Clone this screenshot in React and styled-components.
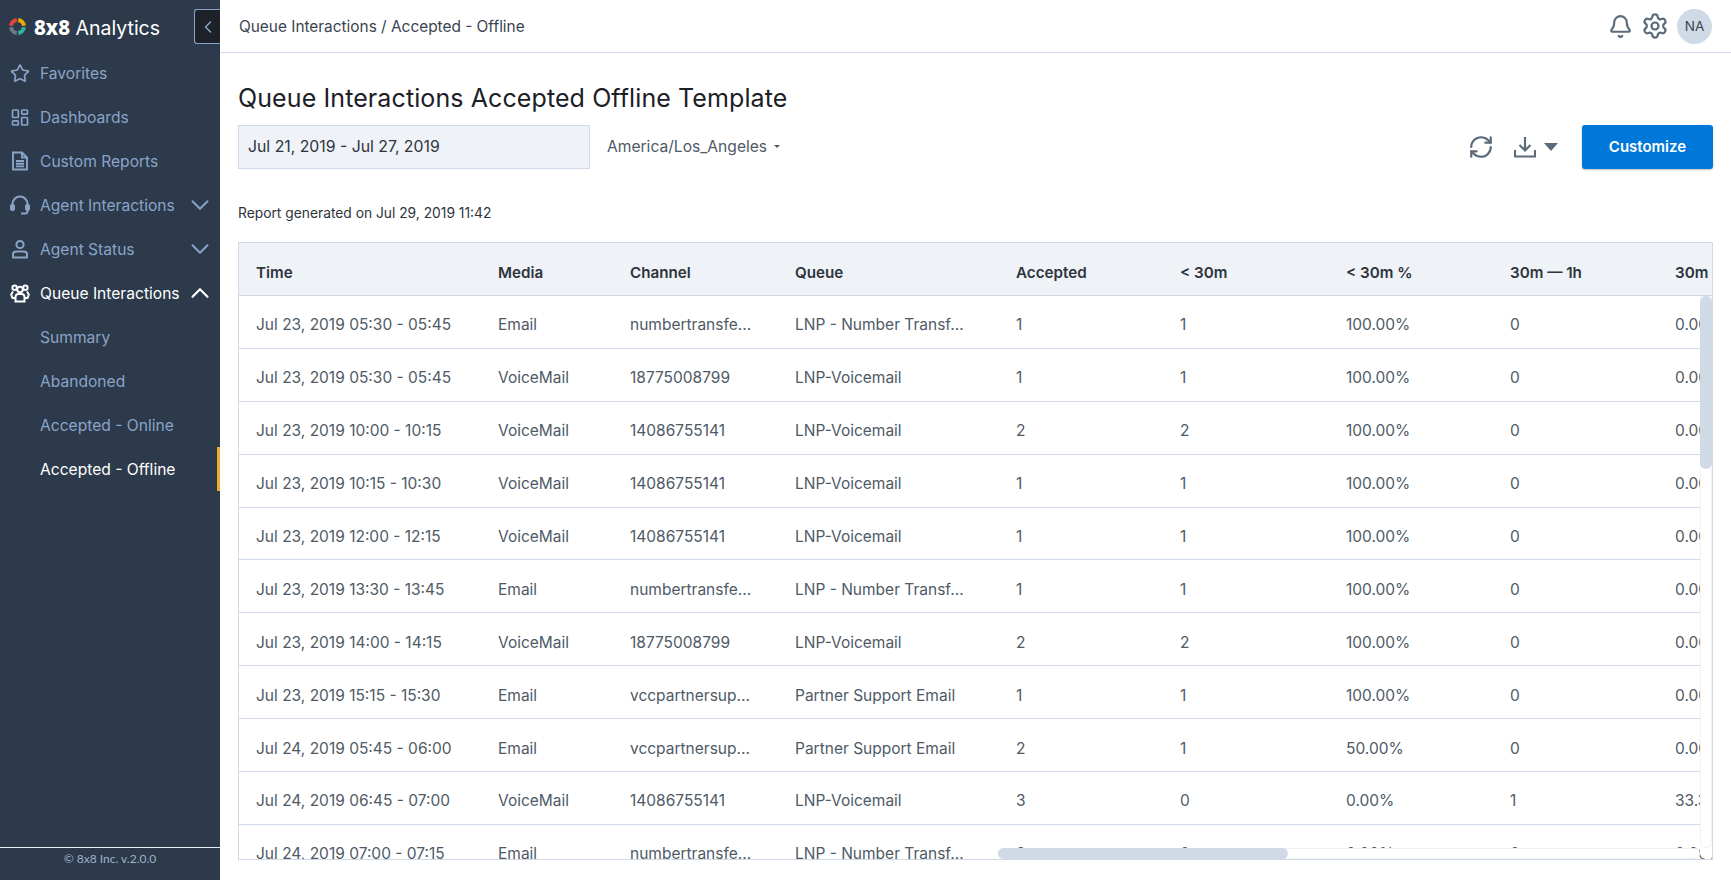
import React from "react";
import styled, { createGlobalStyle } from "styled-components";
import { Star, LayoutDashboard, ChevronDown, ChevronUp, ChevronLeft, Bell, Settings, RefreshCw } from "lucide-react";

const FONT = `Inter, "Noto Sans", sans-serif`;

const GlobalStyle = createGlobalStyle`
    html, body {
        margin: 0;
        height: 100%;
        overflow: hidden;
        background: #fff;
        font-family: ${FONT};
    }
    * {
        box-sizing: border-box;
    }
`;

const Page = styled.div`
    display: flex;
    height: 880px;
    width: 1731px;
`;

const Sidebar = styled.aside`
    position: relative;
    width: 220px;
    flex: none;
    display: flex;
    flex-direction: column;
    background: #2c3a4b;
`;

const Brand = styled.div`
    height: 51px;
    display: flex;
    align-items: center;
    padding: 2px 0 0 9px;
    color: #fff;
    font-size: 19.5px;
    gap: 8px;

    b {
        font-family: "Noto Sans", sans-serif;
        font-size: 20.5px;
        font-weight: 800;
    }
`;

const CollapseButton = styled.button`
    position: absolute;
    top: 9px;
    right: 0;
    width: 26px;
    height: 35px;
    padding: 0;
    display: flex;
    align-items: center;
    justify-content: center;
    background: #1d2229;
    color: #8aa4c8;
    border: 1px solid #8aa4c8;
    border-right: 0;
    border-radius: 3px 0 0 3px;
`;

const Nav = styled.nav`
    flex: 1;
    display: flex;
    flex-direction: column;
`;

const NavItem = styled.div`
    position: relative;
    height: 44px;
    flex: none;
    display: flex;
    align-items: center;
    padding: 0 11px 0 10px;
    font-size: 15.6px;
    color: ${props => (props.$light ? "#fff" : "#8aa4c8")};
`;

const NavIcon = styled.span`
    width: 20px;
    height: 20px;
    margin-right: 10px;
    display: flex;
    align-items: center;
    justify-content: center;
`;

const NavLabel = styled.span`
    flex: 1;
    padding-left: ${props => (props.$sub ? "30px" : "0")};
`;

const NavArrow = styled.span`
    width: 18px;
    height: 18px;
    display: flex;
    align-items: center;
    justify-content: center;
`;

const ActiveMark = styled.span`
    position: absolute;
    top: 0;
    right: 0;
    bottom: 0;
    width: 3px;
    background: #eeaa33;
`;

const SideFooter = styled.div`
    height: 33px;
    flex: none;
    border-top: 1px solid #e8edf3;
    padding-top: 3px;
    text-align: center;
    font-family: Lato, sans-serif;
    font-size: 12px;
    color: #9fb2c9;
`;

const Main = styled.main`
    flex: 1;
    min-width: 0;
    display: flex;
    flex-direction: column;
`;

const TopBar = styled.header`
    height: 53px;
    flex: none;
    display: flex;
    align-items: center;
    justify-content: space-between;
    padding: 0 19px;
    border-bottom: 1px solid #d0dae6;
    font-size: 15.4px;
    color: #3a4450;
`;

const TopIcons = styled.div`
    display: flex;
    align-items: center;
    gap: 8px;
    color: #5c6b7a;
`;

const Avatar = styled.div`
    width: 35px;
    height: 35px;
    border-radius: 50%;
    background: #d0dae6;
    display: flex;
    align-items: center;
    justify-content: center;
    font-size: 13.5px;
    color: #3a4450;
`;

const Content = styled.div`
    flex: 1;
    min-height: 0;
    display: flex;
    flex-direction: column;
    padding: 29px 18px 20px;
`;

const Title = styled.h1`
    margin: 0;
    font-size: 25px;
    line-height: 32px;
    letter-spacing: 0.1px;
    font-weight: 400;
    color: #1b2026;
`;

const Toolbar = styled.div`
    margin-top: 11px;
    display: flex;
    align-items: center;
    height: 44px;
`;

const DateBox = styled.div`
    width: 352px;
    height: 44px;
    display: flex;
    align-items: center;
    padding: 0 0 2px 9px;
    background: #eff2f7;
    border: 1px solid #d0dae6;
    font-size: 15.8px;
    color: #2d343c;
`;

const Zone = styled.div`
    margin-left: 17px;
    flex: 1;
    display: flex;
    align-items: center;
    gap: 7px;
    padding-bottom: 1px;
    font-size: 15.6px;
    color: #4e5a66;
`;

const Caret = styled.span`
    width: 0;
    height: 0;
    border-style: solid;
    border-color: ${props => props.$color} transparent transparent;
    border-width: ${props => props.$h}px ${props => props.$w}px 0;
`;

const ToolIcons = styled.div`
    display: flex;
    align-items: center;
    color: #5c6b7a;
    margin-right: 24px;
`;

const DownloadGroup = styled.div`
    display: flex;
    align-items: center;
    gap: 8px;
    margin-left: 20px;
`;

const CustomizeButton = styled.button`
    width: 131px;
    height: 44px;
    padding: 0 0 2px;
    border: 0;
    border-radius: 3px;
    background: #0078d9;
    box-shadow: 0 1px 2px rgba(0, 0, 0, 0.25);
    color: #fff;
    font-family: ${FONT};
    font-size: 15px;
    font-weight: 600;
`;

const Generated = styled.div`
    margin-top: 35px;
    font-size: 13.8px;
    line-height: 18px;
    color: #2d343c;
`;

const TableFrame = styled.div`
    position: relative;
    margin-top: 20px;
    flex: 1;
    min-height: 0;
    overflow: hidden;
    border: 1px solid #d0dae6;
`;

const Row = styled.div`
    display: grid;
    grid-template-columns: 242px 132px 165px 221px 164px 166px 164px 165px 165px;
    align-items: center;
    height: ${props => (props.$head ? "53px" : "52.9px")};
    padding-top: 6px;
    border-bottom: 1px solid #d0dae6;
    background: ${props => (props.$head ? "#eff2f7" : "#fff")};
    font-size: ${props => (props.$head ? "15.2px" : "15.5px")};
    color: ${props => (props.$head ? "#2d343c" : "#4e5a66")};
    font-weight: ${props => (props.$head ? 600 : 400)};
`;

const Cell = styled.div`
    padding-left: 17px;
    white-space: nowrap;
`;

const VTrack = styled.div`
    position: absolute;
    top: 53px;
    right: 0;
    bottom: 11px;
    width: 12px;
    background: #fff;
    border: 1px solid #eef1f5;
    border-radius: 0 0 6px 6px;
    box-shadow: 0 11px 0 #fff;
`;

const VThumb = styled.div`
    position: absolute;
    top: 53px;
    right: 0;
    width: 12px;
    height: 173px;
    border-radius: 6px;
    background: #d0dae6;
`;

const HTrack = styled.div`
    position: absolute;
    left: 759px;
    right: 12px;
    bottom: 0;
    height: 11px;
    background: #fff;
    border-radius: 6px;
    border: 1px solid #eef1f5;
`;

const HThumb = styled.div`
    position: absolute;
    left: 759px;
    bottom: 0;
    width: 290px;
    height: 11px;
    border-radius: 6px;
    background: #d0dae6;
`;

const LogoRing = () => (
    <svg width="17" height="17" viewBox="0 0 34 34" fill="none" strokeWidth="8">
        <path d="M18.5 4.1 A13 13 0 0 1 29.9 15.5" stroke="#f2a900" />
        <path d="M29.9 18.5 A13 13 0 0 1 18.5 29.9" stroke="#35b0a0" />
        <path d="M15.5 29.9 A13 13 0 0 1 4.1 18.5" stroke="#6d7a86" />
        <path d="M4.1 15.5 A13 13 0 0 1 15.5 4.1" stroke="#e4453a" />
    </svg>
);

const ReportIcon = () => (
    <svg width="18" height="20" viewBox="0 0 18 20" fill="none" stroke="currentColor" strokeWidth="1.9">
        <path d="M2 1.5h9l5 5V18.5H2z" />
        <path d="M11 1.5V6.5h5M5 10h8M5 12.7h8M5 15.4h8" />
    </svg>
);

const HeadsetIcon = () => (
    <svg width="20" height="20" viewBox="0 0 20 20" fill="none" stroke="currentColor" strokeWidth="2">
        <path d="M2.5 12V9a7.5 7.5 0 0 1 15 0v3" />
        <rect x="1" y="10" width="3" height="5" rx="1.2" fill="currentColor" />
        <rect x="16" y="10" width="3" height="5" rx="1.2" fill="currentColor" />
        <path d="M17.5 15v1a2.5 2.5 0 0 1-2.5 2.5h-4" />
    </svg>
);

const PersonIcon = () => (
    <svg width="18" height="20" viewBox="0 0 18 20" fill="none" stroke="currentColor" strokeWidth="2">
        <circle cx="9" cy="5.5" r="3.6" />
        <path d="M2 18.5v-3a3 3 0 0 1 3-3h8a3 3 0 0 1 3 3v3z" />
    </svg>
);

const GroupIcon = () => (
    <svg width="20" height="20" viewBox="0 0 20 20" fill="none" stroke="currentColor" strokeWidth="2">
        <circle cx="10" cy="6.5" r="2.8" />
        <circle cx="4.6" cy="4.8" r="2.2" />
        <circle cx="15.4" cy="4.8" r="2.2" />
        <path d="M5.5 18.5v-4.5a3 3 0 0 1 3-3h3a3 3 0 0 1 3 3v4.5z" />
        <path d="M5.5 15H2.5L1.2 11.5 3 8.5M14.5 15h3l1.3-3.5L17 8.5" />
    </svg>
);

const DownloadIcon = () => (
    <svg width="22" height="22" viewBox="0 0 22 22" fill="none" stroke="currentColor" strokeWidth="2.2">
        <path d="M11 1v13M5.5 9l5.5 5.5L16.5 9" />
        <path d="M1 14v6.5h20V14" />
    </svg>
);

const navItems = [
    { label: "Favorites", icon: <Star size={21} strokeWidth={2} /> },
    { label: "Dashboards", icon: <LayoutDashboard size={23} strokeWidth={2} /> },
    { label: "Custom Reports", icon: <ReportIcon /> },
    { label: "Agent Interactions", icon: <HeadsetIcon />, arrow: "down" },
    { label: "Agent Status", icon: <PersonIcon />, arrow: "down" },
    { label: "Queue Interactions", icon: <GroupIcon />, arrow: "up", light: true },
    { label: "Summary", sub: true },
    { label: "Abandoned", sub: true },
    { label: "Accepted - Online", sub: true },
    { label: "Accepted - Offline", sub: true, light: true, active: true },
];

const columns = ["Time", "Media", "Channel", "Queue", "Accepted", "< 30m", "< 30m %", "30m — 1h", "30m — 1h %"];

const rows = [
    ["Jul 23, 2019 05:30 - 05:45", "Email", "numbertransfe...", "LNP - Number Transf...", "1", "1", "100.00%", "0", "0.00%"],
    ["Jul 23, 2019 05:30 - 05:45", "VoiceMail", "18775008799", "LNP-Voicemail", "1", "1", "100.00%", "0", "0.00%"],
    ["Jul 23, 2019 10:00 - 10:15", "VoiceMail", "14086755141", "LNP-Voicemail", "2", "2", "100.00%", "0", "0.00%"],
    ["Jul 23, 2019 10:15 - 10:30", "VoiceMail", "14086755141", "LNP-Voicemail", "1", "1", "100.00%", "0", "0.00%"],
    ["Jul 23, 2019 12:00 - 12:15", "VoiceMail", "14086755141", "LNP-Voicemail", "1", "1", "100.00%", "0", "0.00%"],
    ["Jul 23, 2019 13:30 - 13:45", "Email", "numbertransfe...", "LNP - Number Transf...", "1", "1", "100.00%", "0", "0.00%"],
    ["Jul 23, 2019 14:00 - 14:15", "VoiceMail", "18775008799", "LNP-Voicemail", "2", "2", "100.00%", "0", "0.00%"],
    ["Jul 23, 2019 15:15 - 15:30", "Email", "vccpartnersup...", "Partner Support Email", "1", "1", "100.00%", "0", "0.00%"],
    ["Jul 24, 2019 05:45 - 06:00", "Email", "vccpartnersup...", "Partner Support Email", "2", "1", "50.00%", "0", "0.00%"],
    ["Jul 24, 2019 06:45 - 07:00", "VoiceMail", "14086755141", "LNP-Voicemail", "3", "0", "0.00%", "1", "33.33%"],
    ["Jul 24, 2019 07:00 - 07:15", "Email", "numbertransfe...", "LNP - Number Transf...", "2", "0", "0.00%", "0", "0.00%"],
];

export default function App() {
    return (
        <Page>
            <GlobalStyle />
            <Sidebar>
                <Brand>
                    <LogoRing />
                    <span>
                        <b>8x8</b> Analytics
                    </span>
                </Brand>
                <CollapseButton>
                    <ChevronLeft size={20} strokeWidth={1.8} />
                </CollapseButton>
                <Nav>
                    {navItems.map(item => (
                        <NavItem key={item.label} $light={item.light}>
                            {item.sub ? null : <NavIcon>{item.icon}</NavIcon>}
                            <NavLabel $sub={item.sub}>{item.label}</NavLabel>
                            {item.arrow ? (
                                <NavArrow>
                                    {item.arrow === "up" ? (
                                        <ChevronUp size={30} strokeWidth={1.7} style={{ flex: "none" }} />
                                    ) : (
                                        <ChevronDown size={30} strokeWidth={1.5} style={{ flex: "none" }} />
                                    )}
                                </NavArrow>
                            ) : null}
                            {item.active ? <ActiveMark /> : null}
                        </NavItem>
                    ))}
                </Nav>
                <SideFooter>© 8x8 Inc. v.2.0.0</SideFooter>
            </Sidebar>
            <Main>
                <TopBar>
                    <span>Queue Interactions / Accepted - Offline</span>
                    <TopIcons>
                        <Bell size={25} strokeWidth={2} />
                        <Settings size={28} strokeWidth={1.9} />
                        <Avatar>NA</Avatar>
                    </TopIcons>
                </TopBar>
                <Content>
                    <Title>Queue Interactions Accepted Offline Template</Title>
                    <Toolbar>
                        <DateBox>Jul 21, 2019 - Jul 27, 2019</DateBox>
                        <Zone>
                            America/Los_Angeles
                            <Caret $color="#4e5a66" $w={3} $h={3} />
                        </Zone>
                        <ToolIcons>
                            <RefreshCw size={26} strokeWidth={2} />
                            <DownloadGroup>
                                <DownloadIcon />
                                <Caret $color="#5c6b7a" $w={7} $h={8} />
                            </DownloadGroup>
                        </ToolIcons>
                        <CustomizeButton>Customize</CustomizeButton>
                    </Toolbar>
                    <Generated>Report generated on Jul 29, 2019 11:42</Generated>
                    <TableFrame>
                        <Row $head>
                            {columns.map(name => (
                                <Cell key={name}>{name}</Cell>
                            ))}
                        </Row>
                        {rows.map((row, i) => (
                            <Row key={i}>
                                {row.map((value, j) => (
                                    <Cell key={j}>{value}</Cell>
                                ))}
                            </Row>
                        ))}
                        <VTrack />
                        <VThumb />
                        <HTrack />
                        <HThumb />
                    </TableFrame>
                </Content>
            </Main>
        </Page>
    );
}
